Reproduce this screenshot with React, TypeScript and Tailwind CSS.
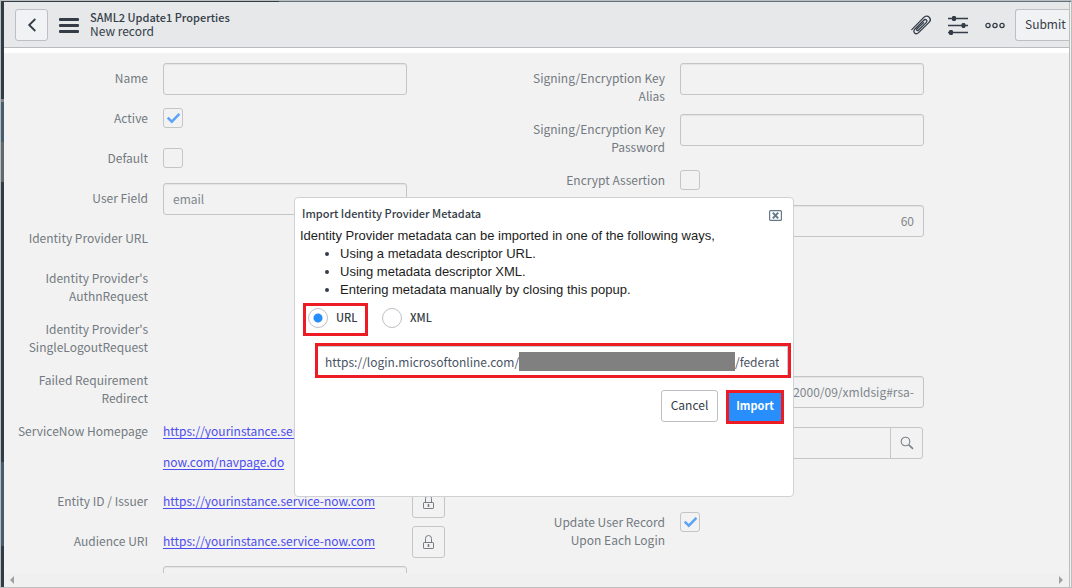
import type { ReactNode } from 'react';

const inputClass =
  'block h-8 w-full rounded-[3px] border border-[#c3c5c7] bg-transparent px-[9px] pb-[2px] text-[12px] text-[#7f868d] shadow-[inset_0_1px_1px_rgba(0,0,0,0.06)] outline-none';
const linkClass =
  '-mt-px block text-[12px] leading-[31px] text-[#4d4dee] underline underline-offset-2 [text-decoration-skip-ink:none]';

function Row({
  label,
  id,
  children,
  addon,
  className = '',
}: {
  label?: string;
  id?: string;
  children?: ReactNode;
  addon?: ReactNode;
  className?: string;
}) {
  return (
    <div className={`mb-2 flex min-h-8 items-start ${className}`}>
      <label htmlFor={id} className="w-36 shrink-0 pb-px pt-[6px] text-right text-[12px] leading-[18px] text-[#737a81]">
        {label}
      </label>
      <div className="ml-[15px] min-w-0 flex-1">{children}</div>
      <div className="ml-[5px] w-[109px] shrink-0">{addon}</div>
    </div>
  );
}

function Check({ id, checked = false }: { id: string; checked?: boolean }) {
  return (
    <span className="relative mt-[5px] block size-5">
      <input
        id={id}
        type="checkbox"
        defaultChecked={checked}
        className="peer block size-5 appearance-none rounded-[3px] border border-[#c3c5c7] bg-transparent"
      />
      <svg
        viewBox="0 0 20 20"
        className="pointer-events-none absolute inset-0 hidden size-5 peer-checked:block"
        fill="none"
        stroke="#5ba3f8"
        strokeWidth="2.4"
      >
        <path d="M4.7 9.6 L8.8 13.7 L16.4 5.8" />
      </svg>
    </span>
  );
}

function LockButton({ name }: { name: string }) {
  return (
    <button aria-label={name} className="flex h-8 w-[33px] items-center justify-center rounded-[3px] border border-[#c3c5c7]">
      <svg width="13" height="16" viewBox="0 0 13 16" fill="none" stroke="#767c82">
        <path d="M3.5 8V4.5a3 3 0 0 1 6 0V8" />
        <rect x="1.5" y="8.5" width="10" height="6" rx="0.6" />
        <path d="M6.5 10v3" strokeWidth="1.6" />
      </svg>
    </button>
  );
}

function Header() {
  return (
    <header className="flex h-[46px] shrink-0 items-start border-b border-[#b9bcbf] bg-[#e6e8ea] pl-[11px] pt-[7px] text-[#343d47]">
      <button aria-label="Back" className="flex h-8 w-[33px] items-center justify-center rounded-[3px] border border-[#bcc0c4] bg-[#f1f2f4]">
        <svg width="10" height="14" viewBox="0 0 10 14" fill="none" stroke="currentColor" strokeWidth="1.8">
          <path d="M8.3 1 L2.2 7 L8.3 13" />
        </svg>
      </button>
      <button aria-label="Menu" className="ml-[11px] mt-[9px]">
        <svg width="20" height="15" viewBox="0 0 20 15" fill="currentColor">
          <rect width="20" height="3" rx="1" />
          <rect y="6" width="20" height="3" rx="1" />
          <rect y="12" width="20" height="3" rx="1" />
        </svg>
      </button>
      <div className="ml-[11px] mt-px flex-1 leading-[14px]">
        <h1 className="text-[11px] font-medium">SAML2 Update1 Properties</h1>
        <p className="text-[12px]">New record</p>
      </div>
      <button aria-label="Attachments" className="mt-[6px]">
        <svg width="20" height="20" viewBox="0 0 20 20" fill="none" stroke="currentColor" strokeWidth="1.3" strokeLinecap="round" strokeLinejoin="round">
          <path d="M0.8 14.6 L12.6 2.6 C14.2 1 16.6 0.6 18.2 2.2 C19.8 3.8 19.4 6 17.8 7.6 L7.6 17.6 C6.4 18.8 4.8 19.2 3.6 18 C2.4 16.8 2.8 15.2 4 14 L12.8 5.2 C13.6 4.4 14.6 4.2 15.4 5 C16.2 5.8 16 6.8 15.2 7.6 L7.4 15.2 C6.9 15.7 6.3 15.8 5.9 15.4 C5.5 15 5.6 14.4 6.1 13.9 L12.6 7.6" />
        </svg>
      </button>
      <button aria-label="Settings" className="ml-[17px] mt-[6px]">
        <svg width="20" height="20" viewBox="0 0 20 20" stroke="currentColor" fill="currentColor">
          <path d="M0 3.5h20M0 10.5h20M0 17.5h20" strokeWidth="1.4" />
          <rect x="4.5" y="1.5" width="3" height="4" rx="0.5" />
          <rect x="14" y="8.5" width="3" height="4" rx="0.5" />
          <rect x="1.5" y="15.5" width="3" height="4" rx="0.5" />
        </svg>
      </button>
      <button aria-label="More options" className="ml-[17px] mt-[13px]">
        <svg width="20" height="7" viewBox="0 0 20 7" fill="none" stroke="currentColor" strokeWidth="1.3">
          <circle cx="3" cy="3.5" r="2.1" />
          <circle cx="10" cy="3.5" r="2.1" />
          <circle cx="17" cy="3.5" r="2.1" />
        </svg>
      </button>
      <button className="ml-[10px] h-8 w-[54px] rounded-l-[3px] border border-r-0 border-[#bcc0c4] bg-[#f1f2f4] pb-[2px] pl-[9px] text-left text-[12px]">
        Submit
      </button>
    </header>
  );
}

function ImportDialog() {
  return (
    <div className="absolute inset-0 flex items-start justify-center pl-4 pt-[196px]">
      <div role="dialog" aria-labelledby="dialog-title" className="h-[300px] w-[500px] rounded-[4px] border border-[#cfd1d3] bg-white">
        <div className="flex h-[29px] items-start justify-between pl-[7px] pr-[11px]">
          <h2 id="dialog-title" className="pt-[6px] text-[11px] font-medium leading-[18px] text-[#343d47]">
            Import Identity Provider Metadata
          </h2>
          <button aria-label="Close" className="mt-3">
            <svg width="13" height="11" viewBox="0 0 13 11" fill="none" stroke="#65798a">
              <rect x="0.6" y="0.6" width="11.8" height="9.8" rx="1" strokeWidth="1.2" />
              <path d="M3.8 2.6 L9.2 8.4 M9.2 2.6 L3.8 8.4" strokeWidth="2" />
            </svg>
          </button>
        </div>
        <div className="pl-[5px] font-['Liberation_Sans',sans-serif] text-[13px] leading-[18px] text-[#1c1c1c]">
          <p>Identity Provider metadata can be imported in one of the following ways,</p>
          <ul className="list-disc pl-10 marker:text-[#343d47]">
            <li>Using a metadata descriptor URL.</li>
            <li>Using metadata descriptor XML.</li>
            <li>Entering metadata manually by closing this popup.</li>
          </ul>
        </div>
        <div className="ml-2 mt-1 flex h-[33px] text-[11px] font-medium leading-[18px] text-[#343d47]">
          <label className="flex w-[65px] items-start gap-2 border-[3px] border-[#ed1c24] pl-[2px] pt-[2px]">
            <input
              type="radio"
              name="source"
              defaultChecked
              className="size-5 shrink-0 appearance-none rounded-full border border-[#bdc0c4] bg-white checked:bg-[radial-gradient(circle,#278efc_4px,transparent_5px)]"
            />
            URL
          </label>
          <label className="ml-[14px] flex items-start gap-2 pt-[5px]">
            <input
              type="radio"
              name="source"
              className="size-5 shrink-0 appearance-none rounded-full border border-[#bdc0c4] bg-white checked:bg-[radial-gradient(circle,#278efc_4px,transparent_5px)]"
            />
            XML
          </label>
        </div>
        <div className="ml-5 mr-[2px] mt-[7px] flex h-[35px] items-center border-[3px] border-[#ed1c24] pl-[7px] pr-[9px] pt-[2px] text-[12px] leading-[18px] text-[#485463] shadow-[inset_-1px_1px_0_#c9ccd0]">
          <input aria-label="Metadata URL" defaultValue="https://login.microsoftonline.com/" className="w-[194px] outline-none" />
          <span className="h-[19px] flex-1 bg-[#808080]" />
          <input aria-label="Metadata URL path" defaultValue="/federat" className="w-[44px] outline-none" />
        </div>
        <div className="mr-[9px] mt-3 flex items-start justify-end gap-2">
          <button className="h-8 w-[57px] rounded-[3px] border border-[#bcc0c4] pb-[2px] text-[12px] text-[#343d47]">Cancel</button>
          <button className="h-[34px] w-[58px] border-[3px] border-[#ed1c24] bg-[#278efc] pb-[3px] text-[11px] font-bold text-white">
            Import
          </button>
        </div>
      </div>
    </div>
  );
}

export default function App() {
  return (
    <div className="relative flex h-screen overflow-hidden border border-[#bdbdbd] bg-[#f2f2f2] font-['Noto_Sans_CJK_SC','Noto_Sans',sans-serif]">
      <div className="flex w-[3px] shrink-0 flex-col bg-[#303d47]">
        <div className="mt-[98px] h-[3px] bg-[#81878c]" />
        <div className="h-10 bg-[#455d6c]" />
        <div className="h-10 bg-[#60696d]" />
        <div className="mt-[280px] h-[84px] bg-[#455d6c]" />
      </div>
      <div className="flex min-w-0 flex-1 flex-col">
        <div className="flex h-px shrink-0 bg-[#5f7480]">
          <div className="w-[275px] bg-[#2d3e49]" />
        </div>
        <div className="mr-px flex min-h-0 flex-1 flex-col border-r border-[#bdbdbd]">
          <Header />
          <div className="h-[5px] shrink-0 bg-white" />
          <main className="grid min-h-0 flex-1 grid-cols-2 overflow-hidden pr-[31px] pt-[10px]">
            <div>
              <Row label="Name" id="name">
                <input id="name" className={inputClass} />
              </Row>
              <Row label="Active" id="active">
                <Check id="active" checked />
              </Row>
              <Row label="Default" id="default">
                <Check id="default" />
              </Row>
              <Row label="User Field" id="user-field">
                <input id="user-field" defaultValue="email" className={inputClass} />
              </Row>
              <Row label="Identity Provider URL" />
              <Row label="Identity Provider's AuthnRequest" />
              <Row label="Identity Provider's SingleLogoutRequest" />
              <Row label="Failed Requirement Redirect" />
              <Row label="ServiceNow Homepage" className="min-h-[62px]">
                <a href="#homepage" className={linkClass}>
                  https://yourinstance.service-
                  <br />
                  now.com/navpage.do
                </a>
              </Row>
              <Row label="Entity ID / Issuer" addon={<LockButton name="Edit entity ID" />}>
                <a href="#entity" className={linkClass}>
                  https://yourinstance.service-now.com
                </a>
              </Row>
              <Row label="Audience URI" addon={<LockButton name="Edit audience URI" />}>
                <a href="#audience" className={linkClass}>
                  https://yourinstance.service-now.com
                </a>
              </Row>
              <Row>
                <input aria-label="NameID policy" className={inputClass} />
              </Row>
            </div>
            <div>
              <Row label="Signing/Encryption Key Alias" id="key-alias">
                <input id="key-alias" className={inputClass} />
              </Row>
              <Row label="Signing/Encryption Key Password" id="key-password">
                <input id="key-password" type="password" className={inputClass} />
              </Row>
              <Row label="Encrypt Assertion" id="encrypt">
                <Check id="encrypt" />
              </Row>
              <Row>
                <input aria-label="Clock skew" defaultValue="60" className={`${inputClass} text-right`} />
              </Row>
              <Row className="mt-[139px]">
                <input
                  aria-label="Signature algorithm"
                  defaultValue="/2000/09/xmldsig#rsa-"
                  className={`${inputClass} text-right`}
                />
              </Row>
              <Row className="mt-[19px]">
                <div className="flex">
                  <input
                    aria-label="Single sign-on script"
                    className="h-8 min-w-0 flex-1 rounded-l-[3px] border border-[#c3c5c7] bg-transparent px-2 text-[12px] outline-none"
                  />
                  <button aria-label="Look up" className="-ml-px mr-px flex h-8 w-[33px] items-center justify-center rounded-r-[3px] border border-[#c3c5c7]">
                    <svg width="14" height="14" viewBox="0 0 14 14" fill="none" stroke="#7b8188" strokeWidth="1.1">
                      <circle cx="5.5" cy="5.5" r="4.3" />
                      <path d="M8.8 8.8 L13 12.8" strokeWidth="1.6" />
                    </svg>
                  </button>
                </div>
              </Row>
              <Row label="Update User Record Upon Each Login" id="update-user" className="mt-12">
                <Check id="update-user" checked />
              </Row>
            </div>
          </main>
          <div className="flex h-[14px] shrink-0 items-center justify-between bg-[#f0f0f0] px-[6px]">
            <svg width="4" height="8" viewBox="0 0 4 8" fill="#a0a0a0">
              <path d="M4 0v8L0 4z" />
            </svg>
            <svg width="4" height="8" viewBox="0 0 4 8" fill="#a0a0a0">
              <path d="M0 0v8l4-4z" />
            </svg>
          </div>
        </div>
      </div>
      <ImportDialog />
    </div>
  );
}
